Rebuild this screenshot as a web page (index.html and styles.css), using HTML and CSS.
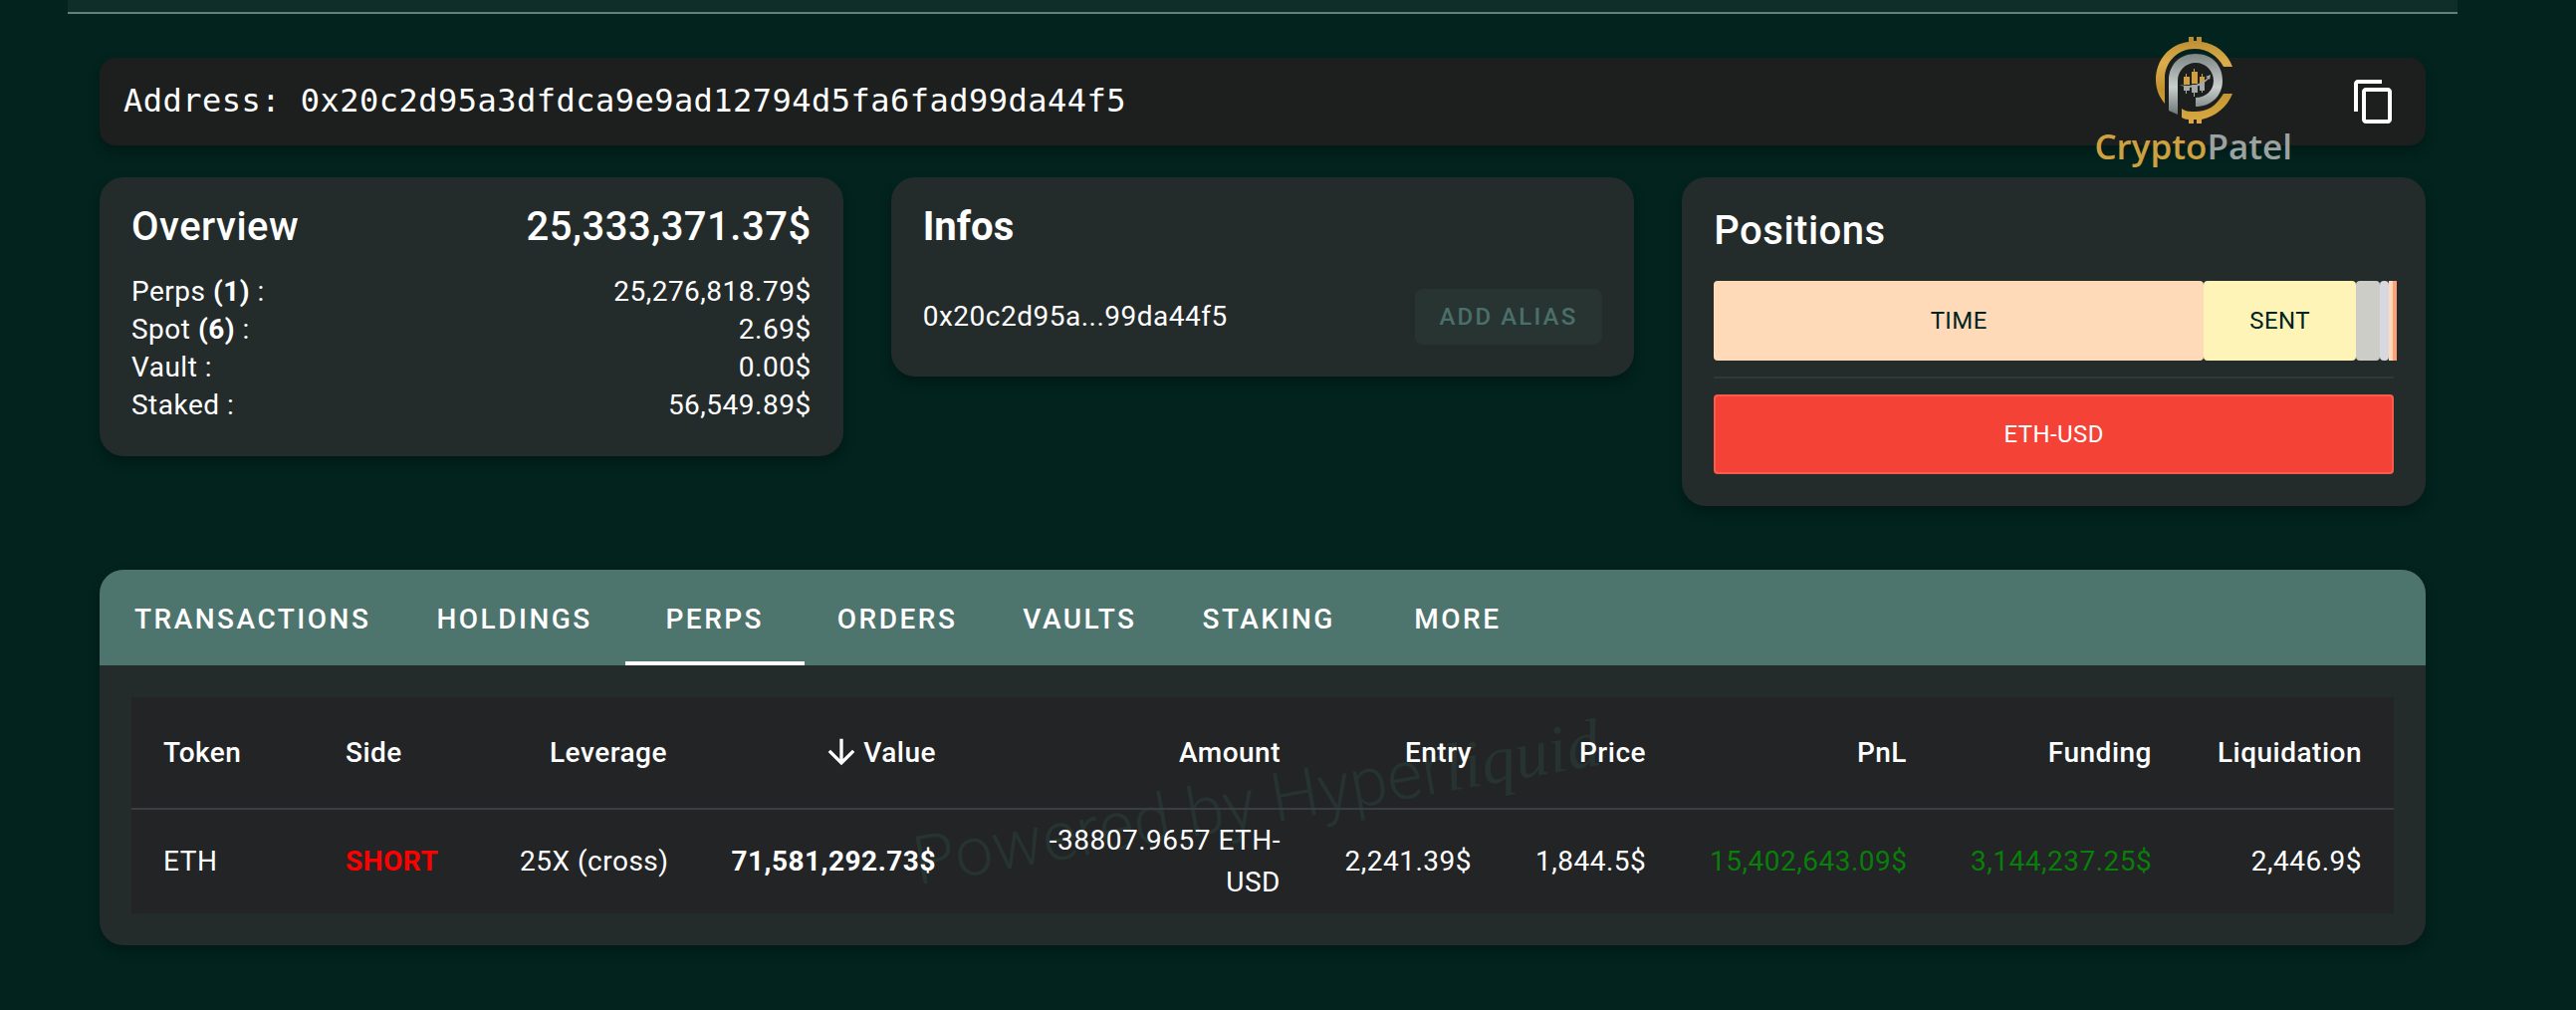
FILE: index.html
```html
<!DOCTYPE html>
<html lang="en">
<head>
<meta charset="utf-8">
<meta name="viewport" content="width=device-width, initial-scale=1">
<title>Address overview</title>
<link rel="stylesheet" href="styles.css">
</head>
<body>
<div class="page">
  <header class="topbar"></header>
  <main class="content">
    <section class="address-bar">
      <p class="address">Address: 0x20c2d95a3dfdca9e9ad12794d5fa6fad99da44f5</p>
      <button class="copy" type="button" aria-label="Copy address">
        <svg viewBox="0 0 24 24" width="48" height="48" fill="currentColor" aria-hidden="true"><path d="M16 1H4c-1.100 0-2 .9-2 2v14h2V3h12V1zm3 4H8c-1.100 0-2 .9-2 2v14c0 1.100.9 2 2 2h11c1.100 0 2-.9 2-2V7c0-1.100-.9-2-2-2zm0 16H8V7h11v14z"/></svg>
      </button>
      <div class="brand">
        <svg class="brand-mark" viewBox="0 0 80 90" width="80" height="90" aria-hidden="true">
          <defs>
            <linearGradient id="gold" x1="0" y1="0" x2="0" y2="1"><stop offset="0" stop-color="#b98a2e"/><stop offset=".3" stop-color="#dbae4b"/><stop offset=".6" stop-color="#c3922f"/><stop offset="1" stop-color="#d9aa43"/></linearGradient>
            <linearGradient id="silver" x1="0" y1="0" x2="0" y2="1"><stop offset="0" stop-color="#7d8685"/><stop offset=".55" stop-color="#c9cecc"/><stop offset="1" stop-color="#6c7775"/></linearGradient>
          </defs>
          <path fill="url(#gold)" d="M35 1h5v4h3V1h5v5c14 2 26 11 31 25h-9C64 20 54 13 41 13C24 13 11 26 11 43v25C5 61 2 53 2 44C2 24 16 8 35 6zM28 73c4 3 8 3 13 3c13 0 21-5 29-18h9c-5 13-17 23-31 26v4h-5v-4h-3v4h-5v-4c-3 0-5-1-7-2z"/>
          <path fill="url(#silver)" d="M15 75V45C15 29 26 18 42 18s27 11 27 27s-12 26-27 26v-9c10 0 18-7 18-17s-8-18-18-18s-18 8-18 18v34z"/>
          <path fill="#d1a03b" d="M32 38h1v3h3v8h-6v-8h2zM40 33h1v3h3v12h-6V36h2zM48 38h1v3h2v6h-5v-6h2z"/>
          <path fill="#a3aaa8" d="M30 50h6v5h-3v3h-1v-3h-2zM38 49h6v8h-3v4h-1v-4h-2zM46 47h5v8h-2v2h-1v-2h-2zM26 49c12 3 22-1 28-7l-2-1l5-2l-1 5l-1-1c-8 9-19 11-29 6z"/>
        </svg>
        <span class="brand-name"><span class="gold">Crypto</span><span class="silver">Patel</span></span>
      </div>
    </section>

    <div class="cards">
      <section class="card">
        <div class="card-head"><h2>Overview</h2><span class="total">25,333,371.37$</span></div>
        <dl class="stats">
          <div><dt>Perps <b>(1)</b> :</dt><dd>25,276,818.79$</dd></div>
          <div><dt>Spot <b>(6)</b> :</dt><dd>2.69$</dd></div>
          <div><dt>Vault :</dt><dd>0.00$</dd></div>
          <div><dt>Staked :</dt><dd>56,549.89$</dd></div>
        </dl>
      </section>
      <section class="card">
        <div class="card-head"><h2 class="strong">Infos</h2></div>
        <div class="alias"><span>0x20c2d95a...99da44f5</span><button type="button" class="alias-btn">ADD ALIAS</button></div>
      </section>
      <section class="card positions">
        <h2>Positions</h2>
        <div class="bar spot">
          <div class="seg time">TIME</div><div class="seg sent">SENT</div><div class="seg grey"></div><div class="seg lilac"></div><div class="seg peach"></div><div class="seg salmon"></div>
        </div>
        <hr>
        <div class="bar perp">ETH-USD</div>
      </section>
    </div>

    <section class="panel">
      <nav class="tabs">
        <a href="#transactions">TRANSACTIONS</a><a href="#holdings">HOLDINGS</a><a href="#perps" class="active" aria-current="page">PERPS</a><a href="#orders">ORDERS</a><a href="#vaults">VAULTS</a><a href="#staking">STAKING</a><a href="#more">MORE</a>
      </nav>
      <div class="table-wrap">
        <div class="watermark" aria-hidden="true">Powered by Hyper<em>liquid</em></div>
        <table>
          <colgroup><col class="c-token"><col class="c-side"><col class="c-lev"><col class="c-value"><col class="c-amount"><col class="c-entry"><col class="c-price"><col class="c-pnl"><col class="c-fund"><col class="c-liq"></colgroup>
          <thead>
            <tr><th class="left">Token</th><th class="left">Side</th><th>Leverage</th><th><svg class="sort" viewBox="0 0 24 24" width="40" height="40" fill="currentColor" aria-hidden="true"><path d="M20 12l-1.410-1.410L13 16.170V4h-2v12.170l-5.580-5.590L4 12l8 8 8-8z"/></svg>Value</th><th>Amount</th><th>Entry</th><th>Price</th><th>PnL</th><th>Funding</th><th>Liquidation</th></tr>
          </thead>
          <tbody>
            <tr><td class="left">ETH</td><td class="left short">SHORT</td><td>25X (cross)</td><td class="bold">71,581,292.73$</td><td class="amount">-38807.9657 ETH-USD</td><td>2,241.39$</td><td>1,844.5$</td><td class="gain">15,402,643.09$</td><td class="gain">3,144,237.25$</td><td>2,446.9$</td></tr>
          </tbody>
        </table>
      </div>
    </section>
  </main>
</div>
</body>
</html>
```
FILE: styles.css
```css
* { box-sizing: border-box; }
body {
  margin: 0;
  background: #02231e;
  color: #fff;
  font: 400 28px/42px Roboto, "Liberation Sans", sans-serif;
}
h2, p, dl, dd { margin: 0; }
.page { margin: 0 119px 0 68px; }
.topbar { height: 14px; background: #102e29; border-bottom: 2px solid #648078; }
.content { padding: 44px 32px 64px; }

.address-bar {
  position: relative;
  display: flex;
  align-items: center;
  justify-content: space-between;
  height: 88px;
  padding: 0 24px;
  border-radius: 16px;
  background: #1c1f1e;
  box-shadow: 0 6px 12px rgba(0, 0, 0, .25);
}
.address { padding-bottom: 2px; font: 32px/48px "DejaVu Sans Mono", "Liberation Mono", monospace; letter-spacing: .015em; }
.copy { display: flex; padding: 4px; border: 0; background: none; color: #fff; }
.brand {
  position: absolute;
  top: -22px;
  right: 134px;
  display: flex;
  flex-direction: column;
  align-items: center;
}
.brand-name { font: 600 35px/42px "Open Sans", sans-serif; }
.gold { color: #cfa040; }
.silver { color: #9aa3a1; }

.cards {
  display: grid;
  grid-template-columns: repeat(3, 1fr);
  align-items: start;
  gap: 48px;
  margin: 32px 0 64px;
}
.card, .panel { border-radius: 24px; background: #242b2b; box-shadow: 0 6px 12px rgba(0, 0, 0, .25); }
.card { padding: 26px 32px 32px; }
.card-head { display: flex; justify-content: space-between; }
h2, .total { font-size: 40px; line-height: 48px; font-weight: 500; letter-spacing: .0125em; }
h2.strong { font-weight: 700; letter-spacing: 0; }
.stats { margin-top: 22px; line-height: 38px; letter-spacing: .0178em; }
.stats div { display: flex; justify-content: space-between; }
.alias { display: flex; align-items: center; justify-content: space-between; margin-top: 38px; letter-spacing: .0178em; }
.alias-btn {
  height: 56px;
  padding: 0 25px;
  border: 0;
  border-radius: 8px;
  background: #283432;
  color: #4a6f69;
  font: 500 24px/40px Roboto, sans-serif;
  letter-spacing: .0892em;
}
.positions h2 { margin-top: 4px; }
.bar { display: flex; height: 80px; font-size: 24px; line-height: 40px; letter-spacing: .0178em; }
.spot { margin: 26px -3px 0 0; }
.seg { display: flex; align-items: center; justify-content: center; border-radius: 4px; color: #02231e; }
.time { flex: 492 0 0; background: #ffdab9; }
.sent { flex: 153 0 0; background: #fff4b8; }
.grey { flex: 24 0 0; background: #cbcdc6; }
.lilac { flex: 9 0 0; background: #d8d8e0; }
.peach, .salmon { flex: 0 0 4px; border-radius: 0; }
.peach { background: #ffdab9; }
.salmon { background: #ffa07a; }
hr { height: 2px; margin: 16px 0; border: 0; background: #303838; }
.perp { align-items: center; justify-content: center; border: 2px solid #f95b4d; border-radius: 4px; background: #f44336; }

.panel { overflow: hidden; }
.tabs { display: flex; height: 96px; padding: 0 2px; background: #4e746e; }
.tabs a {
  display: flex;
  align-items: center;
  justify-content: center;
  min-width: 180px;
  padding: 8px 33px 0;
  border-bottom: 4px solid transparent;
  color: #fff;
  font-weight: 500;
  letter-spacing: .0892em;
  text-decoration: none;
}
.tabs .active { border-color: #fff; }
.table-wrap { position: relative; margin: 32px; background: #222426; }
.watermark {
  position: absolute;
  left: 50%;
  top: 48%;
  padding-right: 12px;
  color: #273330;
  font: 300 68px/80px Roboto, sans-serif;
  white-space: nowrap;
  transform: translate(-50%, -50%) rotate(-10deg);
}
.watermark em { font-family: "Liberation Serif", serif; }
table { position: relative; width: 100%; table-layout: fixed; border-collapse: collapse; letter-spacing: .0178em; }
th, td { padding: 10px 32px; text-align: right; white-space: nowrap; }
th { height: 112px; padding: 0 32px; border-bottom: 2px solid #3a3e40; font-weight: 500; }
td.amount { white-space: normal; }
.left { text-align: left; }
.sort { vertical-align: 0; margin: -10px 2px -10px 0; }
.short { color: #f00; font-weight: 700; }
.bold { font-weight: 700; }
.gain { color: #0a7d0a; }
/* column proportions, scaled to the table's width */
.c-token { width: 183px; }
.c-side { width: 175px; }
.c-lev { width: 212px; }
.c-value { width: 270px; }
.c-amount { width: 346px; }
.c-entry { width: 192px; }
.c-price { width: 175px; }
.c-pnl { width: 262px; }
.c-fund { width: 246px; }
.c-liq { width: 211px; }
```
